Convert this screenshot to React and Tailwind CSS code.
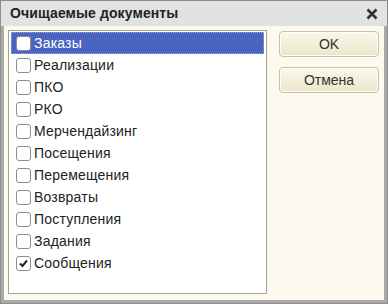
import React from "react";

const items = [
  ["Заказы", false],
  ["Реализации", false],
  ["ПКО", false],
  ["РКО", false],
  ["Мерчендайзинг", false],
  ["Посещения", false],
  ["Перемещения", false],
  ["Возвраты", false],
  ["Поступления", false],
  ["Задания", false],
  ["Сообщения", true],
];

function Check({ checked }) {
  return (
    <div className="w-[15px] h-[15px] shrink-0 rounded-[3px] border border-[#8e8e8e] bg-white flex items-center justify-center">
      {checked && (
        <svg width="11" height="11" viewBox="0 0 11 11">
          <path d="M2 5.5 L4.5 8 L9 2.5" fill="none" stroke="#222" strokeWidth="2" />
        </svg>
      )}
    </div>
  );
}

export default function App() {
  return (
    <div
      className="w-[388px] h-[304px] bg-[#a9a9a9] border border-[#8c8c8c] flex flex-col overflow-hidden"
      style={{ fontFamily: '"Liberation Sans", Arial, sans-serif' }}
    >
      <div className="h-[25px] shrink-0 bg-[#e2e2e2] flex items-center justify-between pl-[9px] pr-[9px]">
        <span className="text-[14px] text-[#222] tracking-[0.1px]" style={{ fontWeight: 600 }}>
          Очищаемые документы
        </span>
        <svg width="12" height="12" viewBox="0 0 12 12">
          <path d="M1.5 1.5 L10.5 10.5 M10.5 1.5 L1.5 10.5" stroke="#333" strokeWidth="2.6" />
        </svg>
      </div>
      <div className="flex-1 mx-[3px] mb-[5px] bg-[#fdf9ef] flex pt-[4px] pl-[4px] pr-[5px] pb-[6px]">
        <div className="w-[259px] h-[264px] border border-[#a3a38f] bg-white p-[2px] pt-[1px]">
          {items.map(([label, checked], i) => (
            <div
              key={label}
              className={
                "h-[22px] flex items-center pl-[5px] gap-[3px] text-[14px] tracking-[0.2px] " +
                (i === 0
                  ? "bg-[#4a64c1] text-white outline outline-1 outline-dotted outline-[#9aa6d8] -outline-offset-1"
                  : "text-[#222]")
              }
            >
              <Check checked={checked} />
              <span>{label}</span>
            </div>
          ))}
        </div>
        <div className="flex-1 flex flex-col items-end gap-[10px] pt-[1px]">
          <button className="w-[100px] h-[26px] rounded-[4px] border border-[#c6c1a8] bg-gradient-to-b from-[#fbf8ea] to-[#ece6cc] text-[14px] text-[#333] shadow-[inset_0_0_0_1px_#fffdf5]">
            OK
          </button>
          <button className="w-[100px] h-[26px] rounded-[4px] border border-[#c6c1a8] bg-gradient-to-b from-[#fbf8ea] to-[#ece6cc] text-[14px] text-[#333] shadow-[inset_0_0_0_1px_#fffdf5]">
            Отмена
          </button>
        </div>
      </div>
    </div>
  );
}
